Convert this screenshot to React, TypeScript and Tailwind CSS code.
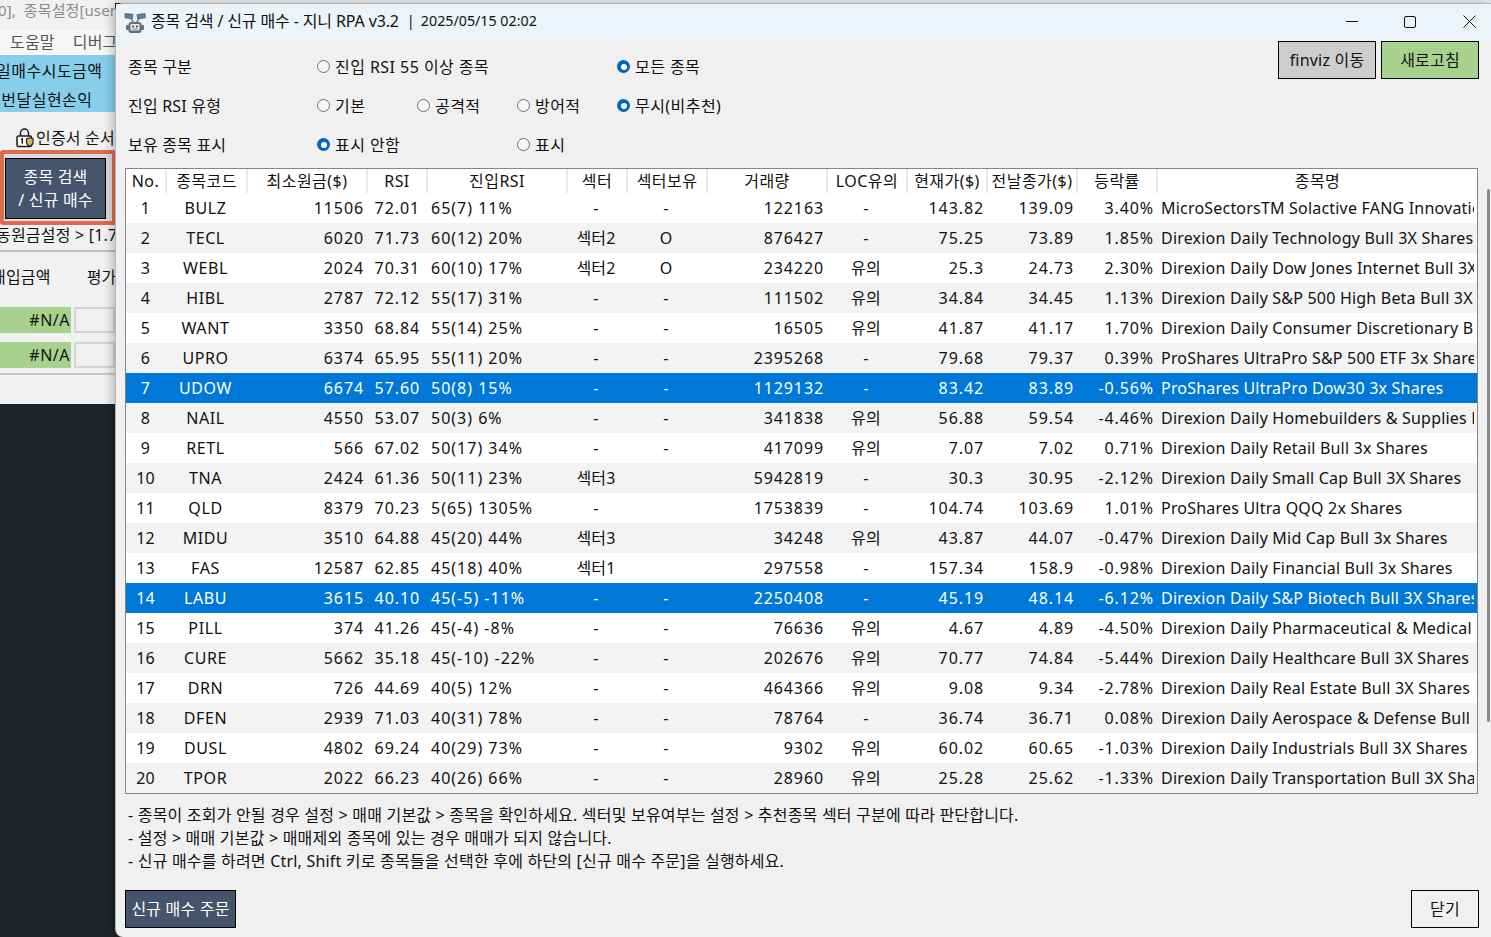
const rows: string[][] = [
  ['1', 'BULZ', '11506', '72.01', '65(7) 11%', '-', '-', '122163', '-', '143.82', '139.09', '3.40%', 'MicroSectorsTM Solactive FANG Innovation ETN'],
  ['2', 'TECL', '6020', '71.73', '60(12) 20%', '섹터2', 'O', '876427', '-', '75.25', '73.89', '1.85%', 'Direxion Daily Technology Bull 3X Shares'],
  ['3', 'WEBL', '2024', '70.31', '60(10) 17%', '섹터2', 'O', '234220', '유의', '25.3', '24.73', '2.30%', 'Direxion Daily Dow Jones Internet Bull 3X Shares'],
  ['4', 'HIBL', '2787', '72.12', '55(17) 31%', '-', '-', '111502', '유의', '34.84', '34.45', '1.13%', 'Direxion Daily S&P 500 High Beta Bull 3X Shares'],
  ['5', 'WANT', '3350', '68.84', '55(14) 25%', '-', '-', '16505', '유의', '41.87', '41.17', '1.70%', 'Direxion Daily Consumer Discretionary Bull 3X Shares'],
  ['6', 'UPRO', '6374', '65.95', '55(11) 20%', '-', '-', '2395268', '-', '79.68', '79.37', '0.39%', 'ProShares UltraPro S&P 500 ETF 3x Shares'],
  ['7', 'UDOW', '6674', '57.60', '50(8) 15%', '-', '-', '1129132', '-', '83.42', '83.89', '-0.56%', 'ProShares UltraPro Dow30 3x Shares'],
  ['8', 'NAIL', '4550', '53.07', '50(3) 6%', '-', '-', '341838', '유의', '56.88', '59.54', '-4.46%', 'Direxion Daily Homebuilders & Supplies Bull 3X'],
  ['9', 'RETL', '566', '67.02', '50(17) 34%', '-', '-', '417099', '유의', '7.07', '7.02', '0.71%', 'Direxion Daily Retail Bull 3x Shares'],
  ['10', 'TNA', '2424', '61.36', '50(11) 23%', '섹터3', '', '5942819', '-', '30.3', '30.95', '-2.12%', 'Direxion Daily Small Cap Bull 3X Shares'],
  ['11', 'QLD', '8379', '70.23', '5(65) 1305%', '-', '', '1753839', '-', '104.74', '103.69', '1.01%', 'ProShares Ultra QQQ 2x Shares'],
  ['12', 'MIDU', '3510', '64.88', '45(20) 44%', '섹터3', '', '34248', '유의', '43.87', '44.07', '-0.47%', 'Direxion Daily Mid Cap Bull 3x Shares'],
  ['13', 'FAS', '12587', '62.85', '45(18) 40%', '섹터1', '', '297558', '-', '157.34', '158.9', '-0.98%', 'Direxion Daily Financial Bull 3x Shares'],
  ['14', 'LABU', '3615', '40.10', '45(-5) -11%', '-', '-', '2250408', '-', '45.19', '48.14', '-6.12%', 'Direxion Daily S&P Biotech Bull 3X Shares'],
  ['15', 'PILL', '374', '41.26', '45(-4) -8%', '-', '-', '76636', '유의', '4.67', '4.89', '-4.50%', 'Direxion Daily Pharmaceutical & Medical Bull'],
  ['16', 'CURE', '5662', '35.18', '45(-10) -22%', '-', '-', '202676', '유의', '70.77', '74.84', '-5.44%', 'Direxion Daily Healthcare Bull 3X Shares'],
  ['17', 'DRN', '726', '44.69', '40(5) 12%', '-', '-', '464366', '유의', '9.08', '9.34', '-2.78%', 'Direxion Daily Real Estate Bull 3X Shares'],
  ['18', 'DFEN', '2939', '71.03', '40(31) 78%', '-', '-', '78764', '-', '36.74', '36.71', '0.08%', 'Direxion Daily Aerospace & Defense Bull 3X'],
  ['19', 'DUSL', '4802', '69.24', '40(29) 73%', '-', '-', '9302', '유의', '60.02', '60.65', '-1.03%', 'Direxion Daily Industrials Bull 3X Shares'],
  ['20', 'TPOR', '2022', '66.23', '40(26) 66%', '-', '-', '28960', '유의', '25.28', '25.62', '-1.33%', 'Direxion Daily Transportation Bull 3X Shares'],
];

const headers = ['No.', '종목코드', '최소원금($)', 'RSI', '진입RSI', '섹터', '섹터보유', '거래량', 'LOC유의', '현재가($)', '전날종가($)', '등락률', '종목명'];

// digits in the screenshot run wider than Noto's, hence the tracking on number columns
const cellAlign = [
  'text-center',
  'text-center tracking-[0.6px]',
  'text-right pr-[2px] tracking-[0.9px]',
  'text-right pr-[6px] tracking-[0.9px]',
  'text-left pl-[5px] tracking-[1px]',
  'text-center',
  'text-center',
  'text-right pr-[2px] tracking-[0.9px]',
  'text-center',
  'text-right pr-[2px] tracking-[0.9px]',
  'text-right pr-[2px] tracking-[0.9px]',
  'text-right pr-[2px] tracking-[0.9px]',
  'text-left pl-[5px] pr-[3px]',
];

const gridCols = 'grid grid-cols-[39px_81px_120px_60px_140px_60px_80px_120px_80px_80px_90px_80px_minmax(0,1fr)]';

function Radio({ label, checked }: { label: string; checked?: boolean }) {
  return (
    <div className="flex items-center gap-[5px]">
      {checked ? (
        <span className="flex h-[13px] w-[13px] items-center justify-center rounded-full bg-[#0067c0]">
          <span className="h-[6px] w-[6px] rounded-full bg-white" />
        </span>
      ) : (
        <span className="h-[13px] w-[13px] rounded-full border border-[#6f6f6f] bg-[#f6f6f6]" />
      )}
      <span className="tracking-[0.45px]">{label}</span>
    </div>
  );
}

function RobotIcon() {
  return (
    <svg width="22" height="22" viewBox="0 0 22 22">
      <path d="M7 7l3 4M15 7l-3 4" stroke="#555" strokeWidth="1.2" />
      <path d="M1 1.5l8 .8-.5 4.4-7.5-.8z" fill="#5f7f9f" stroke="#4a5560" strokeWidth="0.7" />
      <path d="M13 2.5l8-1 .3 4.2-7.6 1.2z" fill="#5f7f9f" stroke="#4a5560" strokeWidth="0.7" />
      <rect x="2" y="13" width="3" height="5" rx="1" fill="#6a6d72" />
      <rect x="17" y="13" width="3" height="5" rx="1" fill="#6a6d72" />
      <rect x="4.5" y="10" width="13" height="11" rx="2.5" fill="#6a6d72" />
      <rect x="6.5" y="12" width="9" height="6.5" rx="1.2" fill="#e9ecee" />
      <circle cx="9" cy="14.5" r="1.1" fill="#444" />
      <circle cx="13" cy="14.5" r="1.1" fill="#444" />
      <path d="M8.5 17h5" stroke="#666" strokeWidth="0.9" />
    </svg>
  );
}

function LockIcon() {
  return (
    <svg width="18" height="20" viewBox="0 0 18 20" fill="none" stroke="#1a1a1a" strokeWidth="1.5">
      <path d="M4.5 8V5a4 4 0 0 1 8 0v3" />
      <rect x="1" y="8" width="14.5" height="10.5" rx="1.5" fill="#fff" />
      <path d="M5 11.5l1.3-.8v5" strokeWidth="1.4" />
      <path d="M10.5 10.8l3.3-1 3.3 1v3.4c0 2-1.7 3.4-3.3 4.3-1.6-.9-3.3-2.3-3.3-4.3z" fill="#d9b45f" strokeWidth="1.1" />
    </svg>
  );
}

function BackgroundApp() {
  return (
    <div className="absolute inset-0 flex flex-col overflow-hidden bg-[#202327]">
      <div className="absolute left-[115px] right-0 top-0 h-[3px] bg-[#e6e6e6]" />
      <div className="w-[115px] overflow-hidden whitespace-nowrap">
        <div className="flex h-[30px] items-start bg-[#f1f1f1] text-[15px] leading-[20px] tracking-[0.1px] text-[#8a8a8a]">
          <span className="ml-[-2px]">0],&nbsp; 종목설정[user</span>
        </div>
        <div className="flex h-[25px] items-center gap-[18px] bg-[#f6f6f6] pb-[2px] pl-[10px] text-[#555]">
          <span>도움말</span>
          <span>디버그</span>
        </div>
        <div className="flex h-[57px] flex-col justify-center bg-[#87ceeb] pt-[4px] text-[#111]">
          <span className="ml-[-4px] h-[29px] leading-[29px] tracking-[0.5px]">일매수시도금액</span>
          <span className="ml-[-14px] h-[28px] leading-[28px] tracking-[0.5px]">이번달실현손익</span>
        </div>
        <div className="flex h-[292px] flex-col bg-[#f1f1f1]">
          <div className="flex h-[38px] items-center gap-[2px] pl-[16px] pt-[14px]">
            <LockIcon />
            <span className="text-[#111]">인증서 순서</span>
          </div>
          <div className="h-[75px] w-[116px] rounded-[3px] border-[4px] border-[#dd6b4d] bg-[#dcdcdc] pl-[1px] pt-[4px]">
            <div className="flex h-[61px] w-[101px] flex-col items-center justify-center border border-black bg-[#44546a] leading-[23px] text-white">
              <span>종목 검색</span>
              <span>/ 신규 매수</span>
            </div>
          </div>
          <div className="ml-[-4px] flex h-[25px] items-center pb-[6px] text-[#111]">동원금설정 &gt; [1.7</div>
          <div className="border-t-2 border-[#bfbfbf]" />
          <div className="flex h-[55px] items-center gap-[36px] pb-[6px] text-[#111]">
            <span className="ml-[-9px]">매입금액</span>
            <span>평가</span>
          </div>
          <div className="flex h-[26px] items-center gap-[3px]">
            <div className="h-full w-[71px] bg-[#a9d18e] pr-[1px] text-right leading-[26px] tracking-[0.5px] text-[#111]">#N/A</div>
            <div className="h-full flex-1 border-2 border-[#d4d4d4] bg-[#f0f0f0]" />
          </div>
          <div className="mt-[9px] flex h-[26px] items-center gap-[3px]">
            <div className="h-full w-[71px] bg-[#a9d18e] pr-[1px] text-right leading-[26px] tracking-[0.5px] text-[#111]">#N/A</div>
            <div className="h-full flex-1 border-2 border-[#d4d4d4] bg-[#f0f0f0]" />
          </div>
          <div className="mt-[5px] border-t-2 border-[#c8c8c8]" />
        </div>
      </div>
    </div>
  );
}

function TitleBar() {
  return (
    <div className="flex h-[37px] shrink-0 items-center bg-[#ecf4f9]">
      <div className="ml-[8px] mr-[5px] flex">
        <RobotIcon />
      </div>
      <span className="pb-[3px] text-[16px] tracking-[-0.13px] text-[#111]">종목 검색 / 신규 매수 - 지니 RPA v3.2</span>
      <span className="ml-[8px] pb-[3px] text-[14.5px] tracking-normal text-[#111]">|</span>
      <span className="ml-[6px] pb-[3px] text-[14.25px] tracking-normal text-[#111]">2025/05/15 02:02</span>
      <div className="ml-auto flex h-full items-center gap-[46px] pb-[2px] pr-[15px]">
        <span className="h-px w-[12px] bg-[#111]" />
        <span className="h-[12px] w-[12px] rounded-[2px] border border-[#111]" />
        <svg className="ml-[1px]" width="13" height="13" viewBox="0 0 13 13" stroke="#111" strokeWidth="1">
          <path d="M.5.5l12 12M12.5.5l-12 12" />
        </svg>
      </div>
    </div>
  );
}

function Filters() {
  return (
    <div className="relative h-[127px] shrink-0 pt-[6px]">
      <div className="flex h-[39px] items-center pl-[12px]">
        <div className="w-[189px]">종목 구분</div>
        <div className="w-[300px]"><Radio label="진입 RSI 55 이상 종목" /></div>
        <Radio label="모든 종목" checked />
      </div>
      <div className="flex h-[39px] items-center pl-[12px]">
        <div className="w-[189px]">진입 RSI 유형</div>
        <div className="w-[100px]"><Radio label="기본" /></div>
        <div className="w-[100px]"><Radio label="공격적" /></div>
        <div className="w-[100px]"><Radio label="방어적" /></div>
        <Radio label="무시(비추천)" checked />
      </div>
      <div className="flex h-[39px] items-center pl-[12px]">
        <div className="w-[189px]">보유 종목 표시</div>
        <div className="w-[200px]"><Radio label="표시 안함" checked /></div>
        <Radio label="표시" />
      </div>
      <div className="absolute right-[12px] top-0 flex gap-[5px]">
        <button className="h-[38px] w-[98px] border border-black bg-[#cdcdcd] text-[#111]">finviz 이동</button>
        <button className="h-[38px] w-[98px] border border-black bg-[#a9d18e] text-[#111]">새로고침</button>
      </div>
    </div>
  );
}

function StockTable() {
  return (
    <div className="ml-[9px] mr-[13px] h-[626px] shrink-0 overflow-hidden border border-[#83868c] bg-white">
      <div className={`${gridCols} h-[24px] bg-white`}>
        {headers.map((h) => (
          <div key={h} className="flex items-center justify-center whitespace-nowrap border-l-2 border-[#e8e8e8] leading-[24px] tracking-[0.45px] first:border-l-0">
            {h}
          </div>
        ))}
      </div>
      {rows.map((row, i) => {
        const selected = row[0] === '7' || row[0] === '14';
        const bg = selected ? 'bg-[#0078d7] text-white' : i % 2 === 1 ? 'bg-[#f3f3f3] text-[#111]' : 'bg-white text-[#111]';
        return (
          <div key={row[0]} className={`${gridCols} h-[30px] ${bg}`}>
            {row.map((cell, j) => (
              <div key={j} className={`overflow-hidden whitespace-nowrap leading-[30px] ${cellAlign[j]}`}>
                {j === 12 ? <div className="overflow-hidden">{cell}</div> : cell}
              </div>
            ))}
          </div>
        );
      })}
    </div>
  );
}

export default function App() {
  return (
    <div
      className="relative h-[937px] w-[1491px] overflow-hidden text-[16px] tracking-[0.2px]"
      style={{ fontFamily: '"Noto Sans", "Noto Sans CJK KR", sans-serif' }}
    >
      <BackgroundApp />
      <div className="absolute left-[115px] top-[3px] flex h-[934px] w-[1376px] flex-col rounded-l-[8px] border-l border-t border-[#b5b5b5] bg-[#f0f0f0] text-[#111] shadow-[-4px_0_8px_rgba(0,0,0,0.2)]">
        <TitleBar />
        <Filters />
        <StockTable />
        <div className="ml-[12px] mt-[10px] flex h-[69px] shrink-0 flex-col leading-[23px]">
          <div>- 종목이 조회가 안될 경우 설정 &gt; 매매 기본값 &gt; 종목을 확인하세요. 섹터및 보유여부는 설정 &gt; 추천종목 섹터 구분에 따라 판단합니다.</div>
          <div>- 설정 &gt; 매매 기본값 &gt; 매매제외 종목에 있는 경우 매매가 되지 않습니다.</div>
          <div>- 신규 매수를 하려면 Ctrl, Shift 키로 종목들을 선택한 후에 하단의 [신규 매수 주문]을 실행하세요.</div>
        </div>
        <div className="mx-[12px] mt-[17px] flex justify-between">
          <button className="ml-[-3px] h-[38px] w-[111px] border border-black bg-[#44546a] text-white">신규 매수 주문</button>
          <button className="h-[38px] w-[68px] border border-black bg-[#f0f0f0] text-[#111]">닫기</button>
        </div>
        <div className="absolute right-[1px] top-[185px] h-[533px] w-[3px] rounded-full bg-[#8a8a8a]" />
      </div>
    </div>
  );
}
